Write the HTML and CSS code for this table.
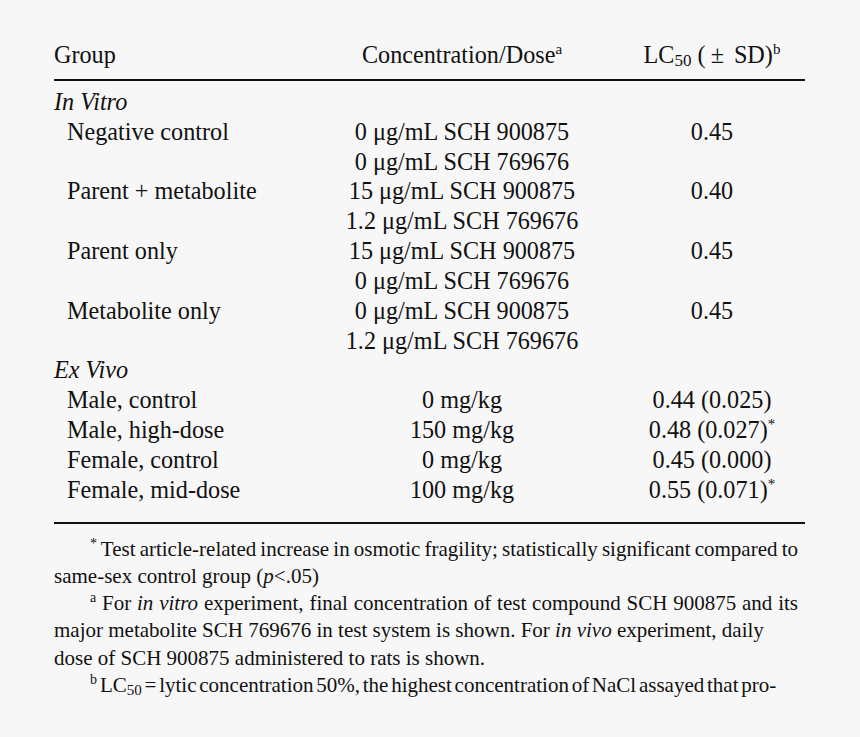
FILE: index.html
```html
<!DOCTYPE html>
<html lang="en">
<head>
<meta charset="utf-8">
<title>Osmotic fragility table</title>
<link rel="stylesheet" href="styles.css">
</head>
<body>
<main class="page">
  <table class="data">
    <colgroup>
      <col class="col-group">
      <col class="col-conc">
      <col class="col-lc">
    </colgroup>
    <thead>
      <tr>
        <th class="c-group">Group</th>
        <th class="c-mid">Concentration/Dose<sup>a</sup></th>
        <th class="c-mid">LC<sub>50</sub> (<span class="pm">±</span>SD)<sup>b</sup></th>
      </tr>
    </thead>
    <tbody>
      <tr class="first"><td class="section" colspan="3">In Vitro</td></tr>
      <tr><td class="sub">Negative control</td><td class="c-mid">0 μg/mL SCH 900875</td><td class="c-mid">0.45</td></tr>
      <tr><td></td><td class="c-mid">0 μg/mL SCH 769676</td><td></td></tr>
      <tr><td class="sub">Parent + metabolite</td><td class="c-mid">15 μg/mL SCH 900875</td><td class="c-mid">0.40</td></tr>
      <tr><td></td><td class="c-mid">1.2 μg/mL SCH 769676</td><td></td></tr>
      <tr><td class="sub">Parent only</td><td class="c-mid">15 μg/mL SCH 900875</td><td class="c-mid">0.45</td></tr>
      <tr><td></td><td class="c-mid">0 μg/mL SCH 769676</td><td></td></tr>
      <tr><td class="sub">Metabolite only</td><td class="c-mid">0 μg/mL SCH 900875</td><td class="c-mid">0.45</td></tr>
      <tr><td></td><td class="c-mid">1.2 μg/mL SCH 769676</td><td></td></tr>
      <tr><td class="section" colspan="3">Ex Vivo</td></tr>
      <tr><td class="sub">Male, control</td><td class="c-mid">0 mg/kg</td><td class="c-mid">0.44 (0.025)</td></tr>
      <tr><td class="sub">Male, high-dose</td><td class="c-mid">150 mg/kg</td><td class="c-mid">0.48 (0.027)<sup>*</sup></td></tr>
      <tr><td class="sub">Female, control</td><td class="c-mid">0 mg/kg</td><td class="c-mid">0.45 (0.000)</td></tr>
      <tr class="last"><td class="sub">Female, mid-dose</td><td class="c-mid">100 mg/kg</td><td class="c-mid">0.55 (0.071)<sup>*</sup></td></tr>
    </tbody>
  </table>

  <div class="notes">
    <p class="note">
      <span class="line lead full tight"><sup class="mark">*</sup> Test article-related increase in osmotic fragility; statistically significant compared to</span>
      <span class="line">same-sex control group (<i>p</i>&lt;.05)</span>
    </p>
    <p class="note">
      <span class="line lead full"><sup class="mark">a</sup> For <i>in vitro</i> experiment, final concentration of test compound SCH 900875 and its</span>
      <span class="line">major metabolite SCH 769676 in test system is shown. For <i>in vivo</i> experiment, daily</span>
      <span class="line">dose of SCH 900875 administered to rats is shown.</span>
    </p>
    <p class="note">
      <span class="line lead tight"><sup class="mark mark-b">b</sup>LC<sub>50</sub> = lytic concentration 50%, the highest concentration of NaCl assayed that pro-</span>
    </p>
  </div>
</main>
</body>
</html>
```

FILE: styles.css
```css
html, body {
  margin: 0;
  padding: 0;
  background: #f7f7f7;
}

body {
  color: #111;
  font-family: "Liberation Serif", "Times New Roman", serif;
}

.page {
  width: 751px;
  margin-left: 54px;
  padding-top: 40px;
}

.data {
  width: 751px;
  border-collapse: collapse;
  table-layout: fixed;
  font-size: 24.2px;
  line-height: 29.85px;
  border-bottom: 2px solid #111;
}

.col-group { width: 251px; }
.col-conc { width: 314px; }
.col-lc { width: 186px; }

.data th,
.data td {
  padding: 0;
  font-weight: normal;
  text-align: left;
  white-space: nowrap;
  vertical-align: top;
}

.data thead th {
  padding-bottom: 9px;
  border-bottom: 2px solid #111;
}

.data .c-mid { text-align: center; }

.data .first td { padding-top: 6px; }
.data .last td { padding-bottom: 17.5px; }

.section { font-style: italic; }
.sub { padding-left: 13px !important; }

.pm {
  margin: 0 10px 0 5px;
}

sup, sub {
  line-height: 0;
}

.data sup {
  font-size: 15px;
  vertical-align: 9px;
}

.data sub {
  font-size: 17px;
  vertical-align: -3px;
}

.notes {
  margin-top: 12px;
  font-size: 21px;
  line-height: 27.1px;
}

.note {
  margin: 0;
}

.line {
  display: block;
  white-space: nowrap;
}

.line.lead {
  padding-left: 36px;
}

.line.full {
  text-align: justify;
  text-align-last: justify;
  width: 708px;
}

.line.tight {
  word-spacing: -2.5px;
}

.notes .mark {
  font-size: 14px;
  vertical-align: 8px;
}

.notes .mark-b {
  margin-right: 3px;
}

.notes sub {
  font-size: 15px;
  vertical-align: -3px;
}
```
